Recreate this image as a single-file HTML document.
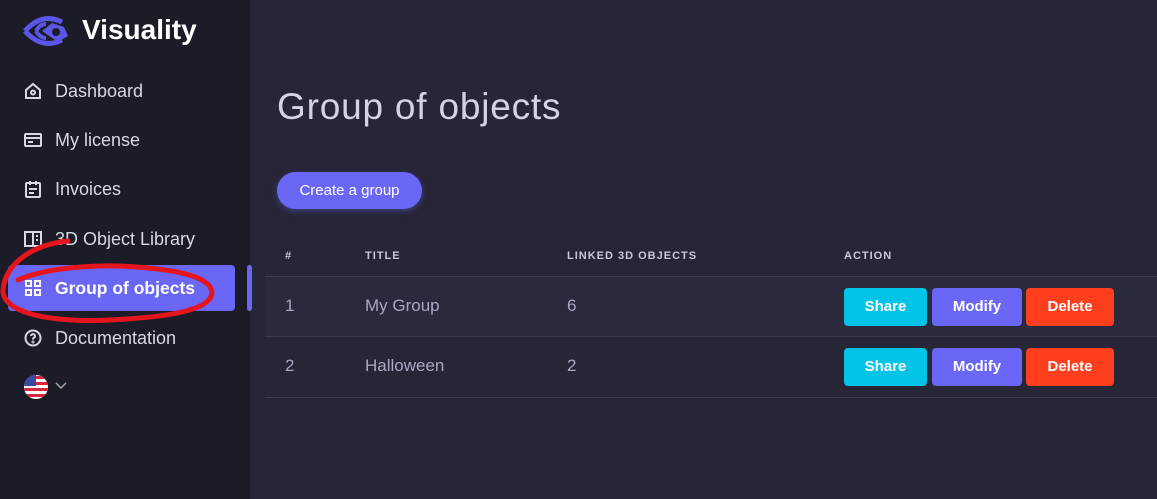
<!DOCTYPE html>
<html><head><style>
body{margin:0;width:1157px;height:499px;overflow:hidden;background:#262637;font-family:"Liberation Sans",sans-serif;position:relative}
.sb{position:absolute;left:0;top:0;width:250px;height:499px;background:#1b1c27}
.logo{position:absolute;left:82px;top:14px;color:#fff;font-weight:bold;font-size:28px}
.it{position:absolute;left:0;height:46px;display:flex;align-items:center;color:#d7d8e4;font-size:18px}
.it svg{position:absolute;left:24px}
.it span{position:absolute;left:55px;white-space:nowrap}
.act{left:8px;width:227px;background:#6a67f6;border-radius:4px;color:#fff;font-weight:bold;font-size:17.5px}
.act svg{left:16px}.act span{left:47px}
h1{position:absolute;left:277px;top:86px;margin:0;font-weight:normal;font-size:37px;letter-spacing:0.8px;color:#d3d3e6}
.cg{position:absolute;left:277px;top:172px;width:145px;height:37px;border-radius:19px;background:#6a67f6;color:#fff;font-size:15px;line-height:37px;text-align:center;box-shadow:0 2px 6px rgba(106,103,246,.4)}
.th{position:absolute;top:250px;font-size:11px;font-weight:bold;letter-spacing:1px;color:#c8c8d8}
.row{position:absolute;left:265px;width:892px;height:60px;border-top:1px solid #3b3c4e}
.td{position:absolute;top:19px;font-size:17px;color:#a8a8c2}
.b{position:absolute;top:11px;height:38px;line-height:38px;text-align:center;color:#fff;font-size:15px;border-radius:4px;font-weight:bold}
</style></head><body>
<div class="sb"></div>
<svg style="position:absolute;left:22px;top:14px" width="52" height="34" viewBox="0 0 52 34"><path d="M3 17 Q20 -2 40 8" stroke="#5b56e6" stroke-width="5" fill="none"/><path d="M3 17 Q20 36 40 26" stroke="#5b56e6" stroke-width="5" fill="none"/><path d="M20 17 L30 9 L42 13 L46 22 L36 28 Z" fill="#5b56e6"/><circle cx="34" cy="18" r="4" fill="#1b1c27"/><path d="M14 17 Q18 10 24 10 M14 17 Q18 24 24 24" stroke="#5b56e6" stroke-width="4" fill="none"/></svg>
<div class="logo">Visuality</div>
<div class="it" style="top:68px"><svg width="18" height="18" viewBox="0 0 18 18" fill="none" stroke="#d7d8e4" stroke-width="2"><path d="M2 8L9 2l7 6v8H2z"/><circle cx="9" cy="10.5" r="2"/></svg><span>Dashboard</span></div>
<div class="it" style="top:117px"><svg width="18" height="18" viewBox="0 0 18 18" fill="none" stroke="#d7d8e4" stroke-width="2"><rect x="1" y="3" width="16" height="12" rx="1"/><path d="M1 7h16M4 11h5"/></svg><span>My license</span></div>
<div class="it" style="top:166px"><svg width="18" height="18" viewBox="0 0 18 18" fill="none" stroke="#d7d8e4" stroke-width="2"><rect x="2" y="3" width="14" height="14" rx="1"/><path d="M6 1v4M12 1v4M5 9h8M5 13h5"/></svg><span>Invoices</span></div>
<div class="it" style="top:216px"><svg width="18" height="18" viewBox="0 0 18 18" fill="none" stroke="#d7d8e4" stroke-width="2"><rect x="1" y="2" width="16" height="14"/><path d="M9 2v14M12 6h2M12 10h2"/></svg><span>3D Object Library</span></div>
<div class="it act" style="top:265px"><svg width="18" height="18" viewBox="0 0 18 18" fill="none" stroke="#fff" stroke-width="2"><rect x="2" y="2" width="5" height="5"/><rect x="11" y="2" width="5" height="5"/><rect x="2" y="11" width="5" height="5"/><rect x="11" y="11" width="5" height="5"/></svg><span>Group of objects</span></div>
<div style="position:absolute;left:247px;top:265px;width:5px;height:46px;background:#6a67f6;border-radius:3px"></div>
<div class="it" style="top:315px"><svg width="18" height="18" viewBox="0 0 18 18" fill="none" stroke="#d7d8e4" stroke-width="2"><circle cx="9" cy="9" r="7.5"/><path d="M7 7a2 2 0 1 1 2.5 2c-.5.2-.5.7-.5 1.5"/><circle cx="9" cy="13" r=".5"/></svg><span>Documentation</span></div>
<svg style="position:absolute;left:23px;top:374px" width="26" height="26" viewBox="0 0 26 26"><clipPath id="c"><circle cx="13" cy="13" r="12"/></clipPath><g clip-path="url(#c)"><rect width="26" height="26" fill="#fff"/><rect y="2" width="26" height="3" fill="#d8263c"/><rect y="8" width="26" height="3" fill="#d8263c"/><rect y="14" width="26" height="3" fill="#d8263c"/><rect y="20" width="26" height="3" fill="#d8263c"/><rect width="13" height="12" fill="#3b4aa0"/></g></svg>
<svg style="position:absolute;left:55px;top:382px" width="12" height="8"><path d="M1 1l5 5 5-5" stroke="#aaa" fill="none" stroke-width="1.5"/></svg>
<svg style="position:absolute;left:0;top:235px" width="240" height="100"><path d="M68 6 C30 10 5 30 3 55 C2 75 40 88 110 85 C170 82 212 75 212 57 C210 42 180 34 120 31 C80 30 40 35 18 45" stroke="#e5151e" stroke-width="5" fill="none" stroke-linecap="round"/></svg>
<h1>Group of objects</h1>
<div class="cg">Create a group</div>
<div class="th" style="left:285px">#</div><div class="th" style="left:365px">TITLE</div><div class="th" style="left:567px">LINKED 3D OBJECTS</div><div class="th" style="left:844px">ACTION</div>
<div class="row" style="top:276px;background:#2a2a3c"><div class="td" style="left:20px">1</div><div class="td" style="left:100px">My Group</div><div class="td" style="left:302px">6</div>
<div class="b" style="left:579px;width:83px;background:#03c3e6">Share</div><div class="b" style="left:667px;width:90px;background:#6a67f6">Modify</div><div class="b" style="left:761px;width:88px;background:#ff3e1d">Delete</div></div>
<div class="row" style="top:336px;border-bottom:1px solid #3b3c4e"><div class="td" style="left:20px">2</div><div class="td" style="left:100px">Halloween</div><div class="td" style="left:302px">2</div>
<div class="b" style="left:579px;width:83px;background:#03c3e6">Share</div><div class="b" style="left:667px;width:90px;background:#6a67f6">Modify</div><div class="b" style="left:761px;width:88px;background:#ff3e1d">Delete</div></div>
</body></html>
